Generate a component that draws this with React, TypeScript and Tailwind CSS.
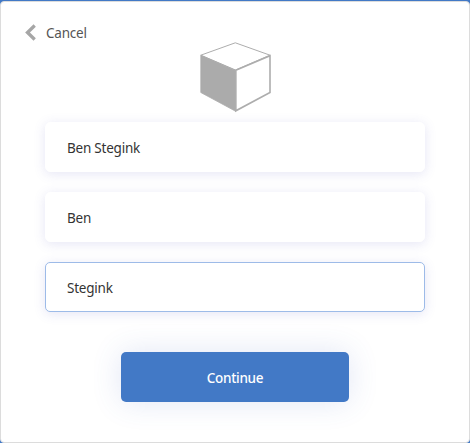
import { useState } from "react";

const fieldBase =
  "block h-[50px] w-[380px] rounded-[5px] border bg-white pl-[21px] pr-5 pt-px text-[13.5px] tracking-[-0.22px] text-[#333] outline-none shadow-[0_2px_12px_rgba(80,80,190,0.15)]";

function Field({ initial, active, label }: { initial: string; active?: boolean; label: string }) {
  const [value, setValue] = useState(initial);
  return (
    <input
      aria-label={label}
      value={value}
      onChange={(e) => setValue(e.target.value)}
      className={`${fieldBase} ${active ? "border-[#9dbbe8]" : "border-white"}`}
    />
  );
}

function Cube() {
  return (
    <svg width="72" height="72" viewBox="0 0 72 72" fill="none" aria-hidden="true">
      <path d="M1.8 13.2 36.3 0.8 71 13.2 36.5 28Z" stroke="#adadad" strokeWidth="1" />
      <path d="M1.8 13.3 36.7 28.5V69.3L1.8 50.5Z" fill="#ababab" stroke="#ababab" strokeWidth="0.8" />
      <path d="M36.8 28.2 71 13.7V50.4L36.8 68.8Z" stroke="#adadad" strokeWidth="1.6" />
    </svg>
  );
}

export default function App() {
  return (
    <div className="h-[443px] w-[470px] bg-[#4279c6] pt-px font-['Noto_Sans','Open_Sans',sans-serif]">
      <main className="flex h-[442px] flex-col items-center rounded-[4px] border border-[#dcdcdc] bg-white">
        <button className="flex h-10 items-center gap-[9px] self-start pl-6 pt-[22px] text-[13.5px] tracking-[-0.22px] text-[#555]">
          <svg width="12" height="18" viewBox="0 0 12 18" fill="none" aria-hidden="true">
            <path d="M9.7 1.5 2.5 8.5l7.2 7" stroke="#a6a6a6" strokeWidth="3.3" />
          </svg>
          Cancel
        </button>
        <Cube />
        <form className="mt-2 flex flex-col items-center" onSubmit={(e) => e.preventDefault()}>
          <div className="flex flex-col gap-5">
            <Field label="Display name" initial="Ben Stegink" />
            <Field label="First name" initial="Ben" />
            <Field label="Last name" initial="Stegink" active />
          </div>
          <button className="mt-10 h-[50px] w-[228px] rounded-[5px] bg-[#4279c6] pt-0.5 text-[13.5px] font-medium tracking-[-0.3px] text-white shadow-[0_0_30px_rgba(66,100,190,0.16)]">
            Continue
          </button>
        </form>
      </main>
    </div>
  );
}
